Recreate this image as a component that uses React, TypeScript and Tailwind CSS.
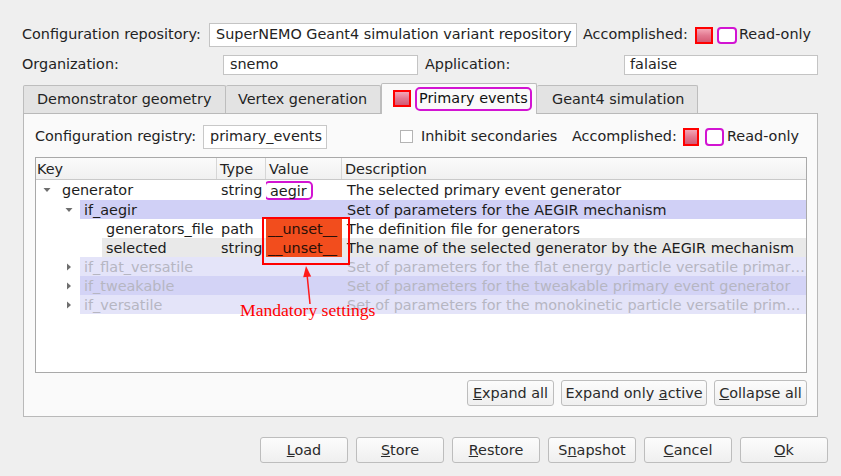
import React from "react";

type Row = {
    depth: 1 | 2 | 3;
    arrow?: "down" | "right";
    name: string;
    type?: string;
    value?: string;
    desc: string;
    bg?: string;
    dim?: boolean;
    unset?: boolean;
    boxed?: boolean;
};

const rows: Row[] = [
    { depth: 1, arrow: "down", name: "generator", type: "string", value: "aegir", desc: "The selected primary event generator", boxed: true },
    { depth: 2, arrow: "down", name: "if_aegir", desc: "Set of parameters for the AEGIR mechanism", bg: "bg-[#d0d0f6]" },
    { depth: 3, name: "generators_file", type: "path", value: "__unset__", desc: "The definition file for generators", unset: true },
    { depth: 3, name: "selected", type: "string", value: "__unset__", desc: "The name of the selected generator by the AEGIR mechanism", bg: "bg-[#e9e9e9]", unset: true },
    { depth: 2, arrow: "right", name: "if_flat_versatile", desc: "Set of parameters for the flat energy particle versatile primary event generator", bg: "bg-[#e4e4f9]", dim: true },
    { depth: 2, arrow: "right", name: "if_tweakable", desc: "Set of parameters for the tweakable primary event generator", bg: "bg-[#d3d3f6]", dim: true },
    { depth: 2, arrow: "right", name: "if_versatile", desc: "Set of parameters for the monokinetic particle versatile primary event generator", bg: "bg-[#e4e4f9]", dim: true },
];

const indentW = { 1: "w-[22px]", 2: "w-[44px]", 3: "w-[66px]" };
const keyW = { 1: "w-[159px]", 2: "w-[137px]", 3: "w-[115px]" };

function Led({ size = "w-[18px] h-[17px]" }: { size?: string }) {
    return <div className={`${size} shrink-0 border-2 border-[#ff0000] bg-gradient-to-b from-[#f3a6b6] via-[#e27890] to-[#d45a74]`} />;
}

function RoCheck({ size = "w-[20px] h-[17px]" }: { size?: string }) {
    return <div className={`${size} shrink-0 border-2 border-[#d214d2] rounded-[4px] bg-white`} />;
}

function Btn({ children, w }: { children: React.ReactNode; w: string }) {
    return (
        <div className={`${w} h-[26px] flex items-center justify-center pt-[1px] border border-[#bdbdbd] rounded-[3px] bg-gradient-to-b from-[#fcfcfc] to-[#efefef] text-[#2a2a2a]`}>
            {children}
        </div>
    );
}

function Arrow({ dir }: { dir: "down" | "right" }) {
    return dir === "down" ? (
        <svg width="8" height="8" viewBox="0 0 8 8"><polygon points="0.5,2 7.5,2 4,6" fill="#6e6e6e" /></svg>
    ) : (
        <svg width="8" height="8" viewBox="0 0 8 8"><polygon points="2,0.5 6,4 2,7.5" fill="#6e6e6e" /></svg>
    );
}

export default function App() {
    return (
        <div className="w-[841px] h-[476px] overflow-hidden bg-[#efefef] font-['DejaVu_Sans',sans-serif] text-[14.4px] text-[#232323]">
            {/* Repository row */}
            <div className="pt-[23px] flex items-center h-[47px]">
                <div className="w-[209px] pl-[22px] whitespace-nowrap">Configuration repository:</div>
                <div className="w-[368px] h-[24px] border border-[#c4c4c4] bg-white flex items-center pl-[6px] whitespace-nowrap">SuperNEMO Geant4 simulation variant repository</div>
                <div className="w-[118px] pl-[6px] whitespace-nowrap">Accomplished:</div>
                <Led />
                <div className="ml-[4px]"><RoCheck /></div>
                <span className="ml-[2px]">Read-only</span>
            </div>

            {/* Organization row */}
            <div className="mt-[8px] flex items-center h-[20px]">
                <div className="w-[223px] pl-[22px]">Organization:</div>
                <div className="w-[195px] h-[20px] border border-[#c4c4c4] bg-white flex items-center pl-[6px]">snemo</div>
                <div className="w-[206px] pl-[7px]">Application:</div>
                <div className="w-[194px] h-[20px] border border-[#c4c4c4] bg-white flex items-center pl-[5px]">falaise</div>
            </div>

            {/* Tabs */}
            <div className="mt-[8px] pl-[23px] flex items-end h-[30px]">
                <div className="w-[203px] h-[28px] border border-b-0 border-[#bdbdbd] rounded-t-[2px] bg-[#e3e3e3] flex items-center pl-[13px] pt-[1px] whitespace-nowrap">Demonstrator geometry</div>
                <div className="w-[155px] h-[28px] border border-b-0 border-l-0 border-[#bdbdbd] rounded-t-[2px] bg-[#e3e3e3] flex items-center pl-[12px] pt-[1px] whitespace-nowrap">Vertex generation</div>
                <div className="relative z-10 w-[156px] h-[31px] mb-[-1px] border border-b-0 border-[#bdbdbd] rounded-t-[2px] bg-[#fafafa] flex items-center pl-[11px] pb-[1px]">
                    <Led />
                    <span className="ml-[4px] h-[24px] px-[2px] flex items-center border-2 border-[#d214d2] rounded-[5px] text-[#111] whitespace-nowrap">Primary events</span>
                </div>
                <div className="w-[161px] h-[28px] border border-b-0 border-l-0 border-[#bdbdbd] rounded-t-[2px] bg-[#e3e3e3] flex items-center pl-[15px] pt-[1px] whitespace-nowrap">Geant4 simulation</div>
            </div>

            {/* Panel */}
            <div className="ml-[23px] w-[795px] h-[304px] border border-[#b9b9b9] bg-[#fafafa] pt-[11px] pl-[11px] pr-[10px]">
                <div className="flex items-center h-[24px]">
                    <div className="w-[168px] whitespace-nowrap">Configuration registry:</div>
                    <div className="w-[124px] h-[24px] border border-[#c8c8c8] bg-white flex items-center pl-[6px]">primary_events</div>
                    <div className="ml-[73px] w-[172px] flex items-center">
                        <div className="w-[13px] h-[13px] border border-[#b4b4b4] bg-white" />
                        <span className="ml-[8px] whitespace-nowrap">Inhibit secondaries</span>
                    </div>
                    <div className="w-[111px] whitespace-nowrap">Accomplished:</div>
                    <Led size="w-[16px] h-[18px]" />
                    <div className="ml-[6px]"><RoCheck size="w-[19px] h-[18px]" /></div>
                    <span className="ml-[3px]">Read-only</span>
                </div>

                {/* Tree */}
                <div className="relative mt-[8px] w-[772px] h-[216px] border border-[#a9a9a9] bg-white">
                    <div className="flex h-[22px] bg-gradient-to-b from-[#fbfbfb] to-[#f0f0f0] border-b border-[#c9c9c9] leading-[23px]">
                        <div className="w-[181px] pl-[1px] border-r border-[#d6d6d6]">Key</div>
                        <div className="w-[49px] pl-[3px] border-r border-[#d6d6d6]">Type</div>
                        <div className="w-[76px] pl-[3px] border-r border-[#d6d6d6]">Value</div>
                        <div className="flex-1 pl-[3px]">Description</div>
                    </div>
                    {rows.map((r, i) => (
                        <div key={i} className={`flex ${i === 0 ? "h-[20px] leading-[21px]" : "h-[19px] leading-[20px]"} ${r.dim ? "text-[#b6b6c2]" : "text-[#1c1c1c]"}`}>
                            <div className={`${indentW[r.depth]} shrink-0 flex justify-end`}>
                                <div className="w-[22px] flex items-center justify-center">{r.arrow && <Arrow dir={r.arrow} />}</div>
                            </div>
                            <div className={`flex flex-1 min-w-0 ${r.bg ?? ""}`}>
                                <div className={`${keyW[r.depth]} shrink-0 pl-[4px] whitespace-nowrap overflow-hidden`}>{r.name}</div>
                                <div className="w-[49px] shrink-0 pl-[4px] whitespace-nowrap overflow-hidden">{r.type}</div>
                                <div className={`w-[76px] shrink-0 whitespace-nowrap overflow-hidden ${r.unset ? "bg-[#f24d1d] pl-[2px] text-[#2a1008]" : "pl-[3px]"}`}>
                                    {r.boxed ? (
                                        <span className="ml-[-5px] mt-[1px] inline-block h-[19px] leading-[16px] px-[4px] border-2 border-[#d214d2] rounded-[5px]">{r.value}</span>
                                    ) : (
                                        r.value
                                    )}
                                </div>
                                <div className="flex-1 min-w-0 pl-[5px] whitespace-nowrap overflow-hidden text-ellipsis">{r.desc}</div>
                            </div>
                        </div>
                    ))}

                    {/* annotation */}
                    <div className="absolute left-[226px] top-[59px] w-[88px] h-[48px] border-2 border-[#ff0000]" />
                    <svg className="absolute left-[254px] top-[102px]" width="30" height="46" viewBox="0 0 30 46">
                        <line x1="20" y1="44" x2="17" y2="14" stroke="#ff1a1a" strokeWidth="1.5" />
                        <polygon points="16,6 21.2,16.5 13.2,17.3" fill="#ff1a1a" />
                    </svg>
                    <div className="absolute left-[204px] top-[144px] font-['Liberation_Serif',serif] text-[17.6px] leading-[17px] text-[#ff0000] whitespace-nowrap">Mandatory settings</div>
                </div>

                <div className="mt-[7px] flex justify-end gap-[7px]">
                    <Btn w="w-[87px]"><span><u>E</u>xpand all</span></Btn>
                    <Btn w="w-[146px]"><span>Expand only <u>a</u>ctive</span></Btn>
                    <Btn w="w-[93px]"><span><u>C</u>ollapse all</span></Btn>
                </div>
            </div>

            {/* Bottom buttons */}
            <div className="mt-[20px] flex justify-end gap-[8px] pr-[13px]">
                <Btn w="w-[88px]"><span><u>L</u>oad</span></Btn>
                <Btn w="w-[88px]"><span><u>S</u>tore</span></Btn>
                <Btn w="w-[88px]"><span><u>R</u>estore</span></Btn>
                <Btn w="w-[88px]"><span>S<u>n</u>apshot</span></Btn>
                <Btn w="w-[88px]"><span><u>C</u>ancel</span></Btn>
                <Btn w="w-[88px]"><span><u>O</u>k</span></Btn>
            </div>
        </div>
    );
}
